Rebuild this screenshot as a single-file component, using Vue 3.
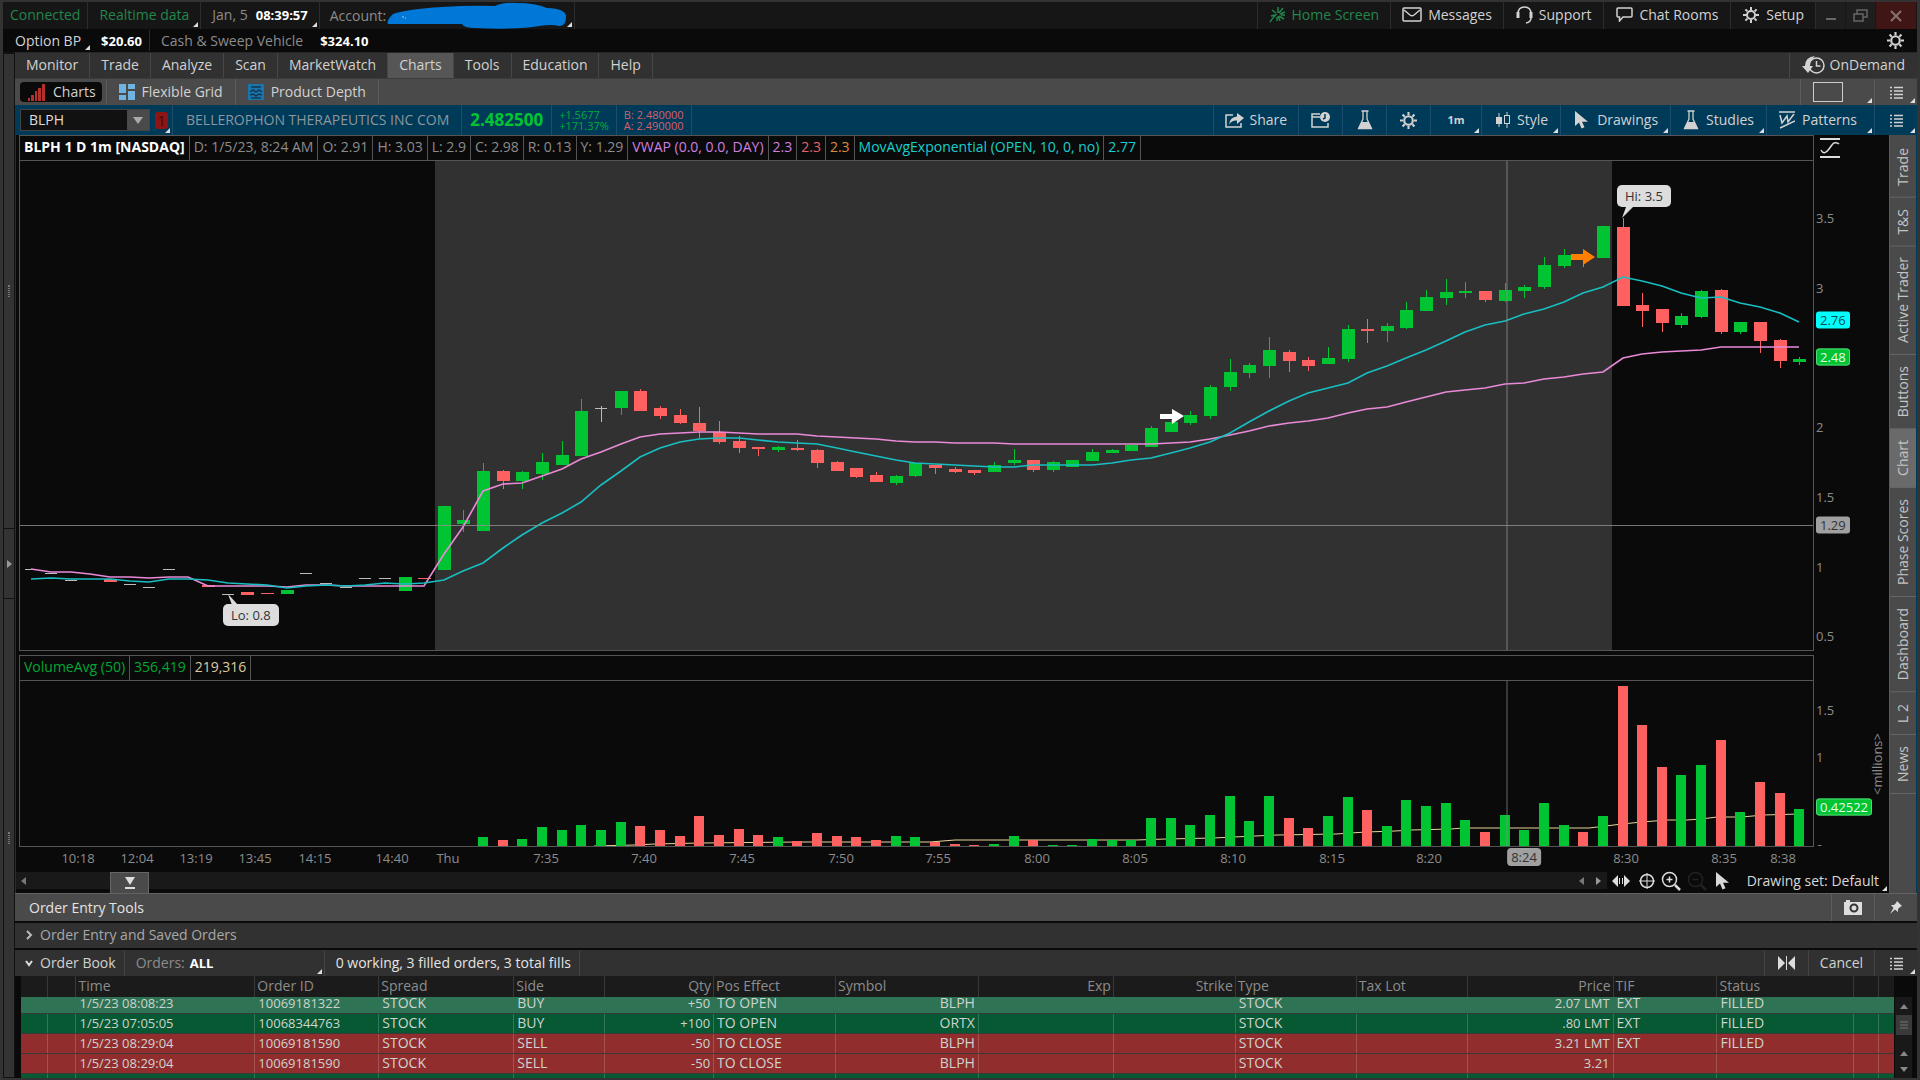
<script setup>
import { ref } from 'vue'

const symbol = ref('BLPH')
const activeMenu = ref('Charts')
const activeSide = ref('Chart')

const menu = ['Monitor', 'Trade', 'Analyze', 'Scan', 'MarketWatch', 'Charts', 'Tools', 'Education', 'Help']
const sideTabs = ['Trade', 'T&S', 'Active Trader', 'Buttons', 'Chart', 'Phase Scores', 'Dashboard', 'L 2', 'News']

const legend = [
    { text: 'BLPH 1 D 1m [NASDAQ]', tone: 'title' },
    { text: 'D: 1/5/23, 8:24 AM' },
    { text: 'O: 2.91' },
    { text: 'H: 3.03' },
    { text: 'L: 2.9' },
    { text: 'C: 2.98' },
    { text: 'R: 0.13' },
    { text: 'Y: 1.29' },
    { text: 'VWAP (0.0, 0.0, DAY)', tone: 'violet' },
    { text: '2.3', tone: 'violet' },
    { text: '2.3', tone: 'coral' },
    { text: '2.3', tone: 'orange' },
    { text: 'MovAvgExponential (OPEN, 10, 0, no)', tone: 'cyan' },
    { text: '2.77', tone: 'cyan' }
]

// view boxes of the two plots: left, top, width, height
const price = { x: 20, y: 161, w: 1793, h: 489 }
const vol = { x: 20, y: 681, w: 1793, h: 165 }

const barX = (i) => Math.round(31.3 + i * 19.645)
const left = (x) => ((x - price.x) / price.w) * 100 + '%'
const top = (y, box) => ((y - box.y) / box.h) * 100 + '%'

// kind, body top, body bottom, high, low
const candles = [
    ['w', 569], ['w', 573], ['w', 580], null, ['r', 579, 582], ['w', 584], ['w', 587], ['w', 569], null, ['r', 585, 587],
    ['w', 594], ['r', 592, 595], ['r', 593, 594], ['g', 590, 594], ['w', 573], ['w', 583], ['w', 587], ['w', 578], ['w', 578], ['g', 577, 591],
    ['r', 578, 579], ['g', 506, 570], ['g', 520, 524, 510, 532], ['g', 471, 531, 463], ['r', 471, 481, 470, 489], ['g', 472, 481, 471, 489], ['g', 462, 474, 453, 480], ['g', 455, 465, 441], ['g', 411, 456, 399], ['w', 408, 408, 406, 422],
    ['g', 391, 408, 391, 415], ['r', 391, 411, 389], ['r', 408, 416, 406, 419], ['r', 415, 423, 409, 424], ['r', 423, 431, 407, 438], ['r', 432, 442, 421, 444], ['r', 441, 448, 436, 453], ['r', 447, 449, 447, 456], ['g', 447, 450, 446, 452], ['r', 448, 450, 440, 451],
    ['r', 450, 463, 449, 468], ['r', 462, 471, 461], ['r', 468, 477, 468, 478], ['r', 475, 482, 472], ['g', 476, 483, 475, 485], ['g', 463, 476, 463, 477], ['r', 465, 468, 465, 474], ['r', 469, 472, 467, 473], ['r', 470, 473, 470, 475], ['g', 465, 472, 462],
    ['g', 460, 463, 449, 465], ['r', 460, 470, 460, 472], ['g', 462, 470, 461, 472], ['g', 460, 467], ['g', 452, 461, 449], ['g', 450, 453, 449], ['g', 445, 451], ['g', 428, 447, 426], ['g', 422, 432, 420], ['g', 415, 423, 411, 425],
    ['g', 387, 416, 385, 419], ['g', 372, 387, 359, 391], ['g', 365, 373, 363, 378], ['g', 350, 366, 337, 378], ['r', 352, 361, 350, 372], ['r', 360, 366, 357, 371], ['g', 358, 364, 347], ['g', 329, 359, 325, 362], ['r', 329, 331, 319, 343], ['g', 326, 331, 323, 342],
    ['g', 310, 328, 302, 329], ['g', 297, 311, 290], ['g', 292, 298, 279, 305], ['g', 291, 293, 282, 298], ['r', 291, 300, 291, 302], ['g', 290, 301, 283, 302], ['g', 287, 291, 285, 298], ['g', 265, 287, 257, 289], ['g', 255, 266, 249, 268], ['r', 257, 260, 252, 267],
    ['g', 226, 258], ['r', 227, 306, 218], ['r', 305, 311, 293, 327], ['r', 309, 323, 309, 332], ['g', 316, 325, 313, 328], ['g', 291, 317, 290, 318], ['r', 290, 332, 289, 334], ['g', 322, 332, 322, 334], ['r', 322, 341, 322, 353], ['r', 340, 361, 339, 368],
    ['g', 359, 362, 357, 365]
].map((c, i) => {
    if (!c) return null
    const [kind, t, b = t, h = t, l = b] = c
    return { kind, x: barX(i), t, b, h, l }
}).filter((c) => c)

const ema = [
    579, 578, 579, 579, 579, 581, 582, 579, 579, 580, 583, 584, 585, 588, 586, 585, 586, 585, 583, 584,
    583, 580, 571, 563, 548, 535, 523, 513, 502, 485, 471, 457, 448, 442, 439, 438, 438, 440, 442, 443,
    444, 448, 452, 456, 460, 463, 464, 465, 466, 467, 467, 465, 465, 465, 465, 463, 460, 458, 453, 448,
    442, 433, 422, 411, 401, 393, 388, 383, 373, 366, 358, 350, 341, 332, 325, 321, 314, 309, 302, 293,
    287, 277, 281, 286, 293, 298, 297, 303, 307, 313, 322
]
const vwap = [
    569, 572, 572, 574, 577, 577, 578, 577, 577, 586, 586, 586, 586, 587, 585, 585, 586, 586, 586, 586,
    586, 554, 527, 491, 484, 483, 476, 469, 459, 452, 444, 437, 434, 433, 432, 432, 433, 434, 434, 434,
    436, 437, 438, 439, 441, 442, 442, 443, 443, 443, 444, 444, 444, 444, 444, 444, 444, 444, 443, 442,
    439, 435, 431, 426, 423, 421, 418, 413, 409, 407, 402, 397, 392, 390, 388, 384, 383, 379, 377, 374,
    372, 358, 354, 352, 351, 350, 347, 347, 347, 347, 347
]
const toPoints = (ys) => ys.map((y, i) => `${barX(i)},${y}`).join(' ')

// bar tops, from 7:32 on
const volumes = [
    837, 840, 839, 827, 830, 825, 830, 822, 826, 830, 836, 816, 835, 829, 835, 837, 841, 833, 836, 837,
    840, 836, 837, 842, 844, 845, 844, 836, 840, 845, 845, 839, 840, 840, 818, 818, 825, 815, 796, 821,
    796, 818, 828, 816, 797, 810, 826, 800, 806, 803, 820, 832, 815, 830, 803, 825, 832, 816, 686, 725,
    767, 775, 765, 740, 812, 782, 793, 809
].map((y, n) => {
    const x = barX(n + 23)
    return { x, y, kind: candles.find((c) => c.x === x)?.kind === 'r' ? 'r' : 'g' }
})
const volAvg = '594,846 634,845 655,844 700,843 800,842 930,842 955,840 1136,840 1166,839 1213,838 1255,836 1277,835 1336,834 1366,832 1395,831 1411,830 1451,829 1463,828 1589,828 1622,824 1642,822 1667,820 1687,820 1701,819 1717,817 1742,817 1763,815 1800,814'

const priceTicks = [
    { text: '3.5', y: 218 }, { text: '3', y: 288 }, { text: '2', y: 427 },
    { text: '1.5', y: 497 }, { text: '1', y: 567 }, { text: '0.5', y: 636 },
    { text: '2.76', y: 320, tag: 'tag-cyan' }, { text: '2.48', y: 357, tag: 'tag-green' }, { text: '1.29', y: 525, tag: 'tag-gray' }
]
const volTicks = [
    { text: '1.5', y: 710 }, { text: '1', y: 757 }, { text: '0.5', y: 803 }, { text: '0', y: 849 },
    { text: '0.42522', y: 807, tag: 'tag-green' }
]
const times = [
    ['10:18', 78], ['12:04', 137], ['13:19', 196], ['13:45', 255], ['14:15', 315], ['14:40', 392], ['Thu', 448],
    ['7:35', 546], ['7:40', 644], ['7:45', 742], ['7:50', 841], ['7:55', 938], ['8:00', 1037], ['8:05', 1135],
    ['8:10', 1233], ['8:15', 1332], ['8:20', 1429], ['8:30', 1626], ['8:35', 1724], ['8:38', 1783]
]

const columns = [
    { w: 27 }, { w: 28 }, { name: 'Time', w: 179, num: true }, { name: 'Order ID', w: 124, num: true }, { name: 'Spread', w: 135 },
    { name: 'Side', w: 91 }, { name: 'Qty', w: 109, right: true, num: true }, { name: 'Pos Effect', w: 122 }, { name: 'Symbol', w: 143, rightCell: true },
    { name: 'Exp', w: 135, right: true }, { name: 'Strike', w: 122, right: true }, { name: 'Type', w: 121 }, { name: 'Tax Lot', w: 111 },
    { name: 'Price', w: 146, right: true, num: true }, { name: 'TIF', w: 104 }, { name: 'Status', w: 137 }, { w: 25 }, { w: 15 }
]
const totalWidth = columns.reduce((sum, c) => sum + c.w, 0)
const orders = [
    { tone: 'hover', cells: ['', '', '1/5/23 08:08:23', '10069181322', 'STOCK', 'BUY', '+50', 'TO OPEN', 'BLPH', '', '', 'STOCK', '', '2.07 LMT', 'EXT', 'FILLED', '', ''] },
    { tone: 'buy', cells: ['', '', '1/5/23 07:05:05', '10068344763', 'STOCK', 'BUY', '+100', 'TO OPEN', 'ORTX', '', '', 'STOCK', '', '.80 LMT', 'EXT', 'FILLED', '', ''] },
    { tone: 'sell', cells: ['', '', '1/5/23 08:29:04', '10069181590', 'STOCK', 'SELL', '-50', 'TO CLOSE', 'BLPH', '', '', 'STOCK', '', '3.21 LMT', 'EXT', 'FILLED', '', ''] },
    { tone: 'sell', cells: ['', '', '1/5/23 08:29:04', '10069181590', 'STOCK', 'SELL', '-50', 'TO CLOSE', 'BLPH', '', '', 'STOCK', '', '3.21', '', '', '', ''] },
    { tone: 'buy', cells: columns.map(() => '') }
]
</script>

<template>
    <div class="app">
        <svg class="defs" aria-hidden="true">
            <symbol id="gear" viewBox="0 0 16 16">
                <circle cx="8" cy="8" r="4" fill="none" stroke="currentColor" stroke-width="2" />
                <path d="M8 0v3M8 13v3M0 8h3M13 8h3M2.4 2.4l2 2M11.6 11.6l2 2M13.6 2.4l-2 2M4.4 11.6l-2 2" stroke="currentColor" stroke-width="2" />
            </symbol>
            <symbol id="list" viewBox="0 0 13 13">
                <path d="M0 1.5h2M0 5h2M0 8.5h2M0 12h2M4 1.5h9M4 5h9M4 8.5h9M4 12h9" stroke="currentColor" stroke-width="1.5" />
            </symbol>
            <symbol id="flask" viewBox="0 0 16 20">
                <path d="M4.5 1h7M6 1v8L1.5 18.5h13L10 9V1" fill="none" stroke="currentColor" stroke-width="1.3" />
                <path d="M4.5 12h7l3.5 7H1z" fill="currentColor" />
            </symbol>
            <symbol id="cursor" viewBox="0 0 13 18">
                <path d="M0 0v15l4-3.5 2.5 6 3-1.3-2.5-5.5H13z" fill="currentColor" />
            </symbol>
        </svg>

        <header class="status">
            <button class="cell dim-green">Connected</button>
            <button class="cell dim-green corner">Realtime data</button>
            <button class="cell corner muted">Jan, 5 <b>08:39:57</b></button>
            <button class="cell corner account muted">
                Account:
                <svg class="redact" width="180" height="27" viewBox="0 0 180 27">
                    <path d="M1 22Q-1 19 6 12Q20 7 55 5Q85 3 108 4Q116 0 130 1Q148 1 160 6Q180 7 179 15Q179 24 172 24Q165 22 152 24Q130 28 88 26Q77 26 75 22Z" fill="#0078d7" />
                    <path d="M15 15h2M18 16h1" stroke="#9cf" stroke-width="1" />
                </svg>
            </button>
            <span class="grow"></span>
            <button class="cell edge dim-green">
                <svg width="17" height="17" viewBox="0 0 17 17" fill="none" stroke="currentColor" stroke-width="1.5">
                    <path d="M1 16Q5 10 8 8M9 1v6M14 2l-4 5M16 6l-5 2M3 4l4 3M2 10l4-1M10 10l5 3M9 10l2 5M8 11v4M12 9h4" />
                </svg>
                Home Screen
            </button>
            <button class="cell">
                <svg width="20" height="15" viewBox="0 0 20 15" fill="none" stroke="currentColor" stroke-width="1.5">
                    <rect x="1" y="1" width="18" height="13" rx="1" /><path d="M2 3l6 5q2 1.5 4 0l6-5" />
                </svg>
                Messages
            </button>
            <button class="cell wide">
                <svg width="17" height="18" viewBox="0 0 17 18" fill="none" stroke="currentColor">
                    <path d="M2 8Q2 1 8.5 1T15 8" stroke-width="1.5" /><path d="M2 6v6M15 6v6" stroke-width="3" /><path d="M15 12q0 4-5 5" stroke-width="1.5" />
                </svg>
                Support
            </button>
            <button class="cell wide">
                <svg width="17" height="15" viewBox="0 0 17 15" fill="none" stroke="currentColor" stroke-width="1.5">
                    <path d="M2 1h13q1 0 1 1v7q0 1-1 1H7l-3.5 4v-4H2q-1 0-1-1V2q0-1 1-1z" />
                </svg>
                Chat Rooms
            </button>
            <button class="cell setup"><svg width="16" height="16"><use href="#gear" /></svg>Setup</button>
            <button class="win" aria-label="Minimize"><svg width="12" height="12"><path d="M1 9h10" stroke="#666" stroke-width="2" /></svg></button>
            <button class="win" aria-label="Restore">
                <svg width="15" height="14" viewBox="0 0 15 14" fill="none" stroke="#666" stroke-width="1.5"><path d="M4 5V1h10v7h-4" /><rect x="1" y="5" width="9" height="7" /></svg>
            </button>
            <button class="win close" aria-label="Close"><svg width="12" height="12"><path d="M1 1l10 10M11 1L1 11" stroke="#8a7070" stroke-width="2" /></svg></button>
        </header>

        <div class="balance">
            <button class="bp corner">Option BP</button>
            <b>$20.60</b>
            <i class="rule"></i>
            <span class="muted">Cash &amp; Sweep Vehicle</span>
            <b class="cash">$324.10</b>
            <span class="grow"></span>
            <button class="icon-btn" aria-label="Account settings"><svg width="17" height="17"><use href="#gear" /></svg></button>
        </div>

        <div class="body">
            <aside class="gutter">
                <div class="g1"><i class="dots"></i></div>
                <div class="g2"><svg width="5" height="8"><path d="M0 0l5 4-5 4z" fill="#999" /></svg></div>
                <div class="g3"><i class="dots"></i></div>
            </aside>
            <main class="main">
                <nav class="menu">
                    <button v-for="m in menu" :key="m" :class="{ active: m === activeMenu }" @click="activeMenu = m">{{ m }}</button>
                    <span class="grow"></span>
                    <button class="ondemand">
                        <svg width="23" height="18" viewBox="0 0 23 18">
                            <circle cx="14.5" cy="9.5" r="7.5" fill="none" stroke="currentColor" stroke-width="1.5" />
                            <path d="M14.5 5v5h4" fill="none" stroke="currentColor" stroke-width="1.5" />
                            <path d="M13 0Q3 1 3 10H0l6 7 5-7H8Q8 4 13 0z" fill="currentColor" />
                        </svg>
                        OnDemand
                    </button>
                </nav>

                <nav class="subtabs">
                    <div class="sub first">
                        <button class="pill">
                            <svg width="17" height="17" viewBox="0 0 17 17" fill="#b5302c"><path d="M0 14h2v3H0zM3 11h3v6H3zM7 7h2v10H7zM10 4h3v13h-3zM14 0h3v17h-3z" /></svg>
                            Charts
                        </button>
                    </div>
                    <button class="sub">
                        <svg width="16" height="16" viewBox="0 0 16 16" fill="#6fb4e0"><path d="M0 0h7v9H0zM9 0h7v5H9zM0 11h7v5H0zM9 7h7v9H9z" /></svg>
                        Flexible Grid
                    </button>
                    <button class="sub">
                        <svg width="16" height="16" viewBox="0 0 16 16"><rect width="16" height="16" fill="#1a75ae" /><path d="M3 3h10M2 8l3-2 3 2 3-2 3 2M2 11l3-1 3 2 3-2 3 1M3 14h10" fill="none" stroke="#12384f" stroke-width="1.5" /></svg>
                        Product Depth
                    </button>
                    <span class="grow"></span>
                    <button class="layout corner" aria-label="Grid layout"><i></i></button>
                    <button class="menu-btn corner" aria-label="Tab menu"><svg width="13" height="13"><use href="#list" /></svg></button>
                </nav>

                <div class="toolbar">
                    <div class="symbol">
                        <input v-model="symbol" aria-label="Symbol" />
                        <button aria-label="Recent symbols"><svg width="10" height="7"><path d="M0 0h10L5 7z" fill="#aaa" /></svg></button>
                    </div>
                    <button class="link corner" aria-label="Link group"><span>1</span></button>
                    <div class="tcell name">BELLEROPHON THERAPEUTICS INC COM</div>
                    <div class="tcell last">2.482500</div>
                    <div class="tcell stack up"><span>+1.5677</span><span>+171.37%</span></div>
                    <div class="tcell stack down"><span>B: 2.480000</span><span>A: 2.490000</span></div>
                    <span class="tcell grow"></span>
                    <button class="tcell share">
                        <svg width="19" height="15" viewBox="0 0 19 15">
                            <path d="M8 2H1v12h15v-4" fill="none" stroke="currentColor" stroke-width="1.5" />
                            <path d="M12 0l7 5-7 6V7.5Q7 7 4 11.5 5 4 12 3.5z" fill="currentColor" />
                        </svg>
                        Share
                    </button>
                    <button class="tcell tool" aria-label="Alerts">
                        <svg width="19" height="16" viewBox="0 0 19 16" fill="none" stroke="currentColor" stroke-width="1.5">
                            <path d="M9 2H1v13h16v-4M1 5h8" /><circle cx="14" cy="5" r="5" fill="currentColor" stroke="none" /><path d="M14 2v4l-2 1" stroke="#003a59" />
                        </svg>
                    </button>
                    <button class="tcell tool" aria-label="Edit studies"><svg width="16" height="20"><use href="#flask" /></svg></button>
                    <button class="tcell tool" aria-label="Chart settings"><svg width="17" height="17"><use href="#gear" /></svg></button>
                    <button class="tcell frame-btn corner">1m</button>
                    <button class="tcell corner style-btn">
                        <svg width="14" height="16" viewBox="0 0 14 16"><path d="M3 1v14M11 0v3M11 12v4" stroke="currentColor" /><rect y="5" width="6" height="7" fill="currentColor" /><rect x="8.5" y="3.5" width="5" height="8" fill="none" stroke="currentColor" /></svg>
                        Style
                    </button>
                    <button class="tcell corner"><svg width="17" height="18"><use href="#cursor" /></svg>Drawings</button>
                    <button class="tcell corner"><svg width="16" height="20"><use href="#flask" /></svg>Studies</button>
                    <button class="tcell corner patterns">
                        <svg width="16" height="18" viewBox="0 0 16 18" fill="none" stroke="currentColor" stroke-width="1.5"><path d="M0 1h16M1 4l2 8 5-7 1 6 6-8M1 17l15-7" /></svg>
                        Patterns
                    </button>
                    <button class="menu-btn tcell corner" aria-label="Chart menu"><svg width="13" height="13"><use href="#list" /></svg></button>
                </div>

                <div class="workspace">
                    <section class="charts">
                        <div class="panel price">
                            <div class="frame">
                                <div class="legend">
                                    <span v-for="(l, i) in legend" :key="i" :class="l.tone">{{ l.text }}</span>
                                </div>
                                <div class="plot">
                                    <svg class="canvas" :viewBox="`${price.x} ${price.y} ${price.w} ${price.h}`" preserveAspectRatio="none">
                                        <rect x="435" y="161" width="1177" height="489" fill="#313131" />
                                        <g v-for="c in candles" :key="c.x" :class="c.kind">
                                            <rect v-if="c.l > c.h" :x="c.x" :y="c.h" width="1" :height="c.l - c.h" />
                                            <rect :x="c.x - 6" :y="c.t" :width="c.kind === 'w' ? 12 : 13" :height="c.kind === 'w' ? 1 : c.b - c.t" />
                                        </g>
                                        <polyline :points="toPoints(vwap)" class="vwap" stroke-width="1.6" />
                                        <polyline :points="toPoints(ema)" class="ema" stroke-width="1.6" />
                                        <path d="M20 525.5H1813M1507 161V650" stroke="#909090" stroke-opacity=".8" />
                                        <path d="M1160 414h12v-5l12 7-12 8v-5h-12z" fill="#fff" />
                                        <path d="M1571 254h12v-5l12 8-12 8v-5h-12z" fill="#ff7f00" />
                                        <path d="M228 594l4 11h6z" fill="#ddd" />
                                        <path d="M1622 218l4-11h7z" fill="#ddd" />
                                    </svg>
                                    <span class="callout" :style="{ left: left(223), top: top(604, price) }">Lo: 0.8</span>
                                    <span class="callout" :style="{ left: left(1617), top: top(185, price) }">Hi: 3.5</span>
                                </div>
                            </div>
                            <div class="axis">
                                <div class="fit">
                                    <svg width="20" height="20" viewBox="0 0 20 20" fill="none" stroke="#ddd"><path d="M0 1h20M0 19h20" stroke-width="2" /><path d="M1 12q3 6 8-1t5-6q3-1 5 1" stroke-width="1.5" /></svg>
                                </div>
                                <div class="scale">
                                    <span v-for="t in priceTicks" :key="t.text" :class="['tick', t.tag]" :style="{ top: top(t.y, price) }">{{ t.text }}</span>
                                </div>
                            </div>
                        </div>

                        <div class="panel volume">
                            <div class="frame">
                                <div class="legend">
                                    <span class="green">VolumeAvg (50)</span><span class="green">356,419</span><span class="sand">219,316</span>
                                </div>
                                <div class="plot">
                                    <svg class="canvas" :viewBox="`${vol.x} ${vol.y} ${vol.w} ${vol.h}`" preserveAspectRatio="none">
                                        <polyline :points="volAvg" class="avg" />
                                        <rect v-for="v in volumes" :key="v.x" :class="v.kind" :x="v.x - 5" :y="v.y" width="10" :height="846 - v.y" />
                                        <path d="M1507 681V846" stroke="#909090" stroke-opacity=".7" />
                                    </svg>
                                </div>
                            </div>
                            <div class="axis">
                                <div class="fit"></div>
                                <div class="scale clip">
                                    <span v-for="t in volTicks" :key="t.text" :class="['tick', t.tag]" :style="{ top: top(t.y, vol) }">{{ t.text }}</span>
                                    <span class="unit">&lt;millions&gt;</span>
                                </div>
                            </div>
                        </div>

                        <div class="times">
                            <span v-for="[t, x] in times" :key="t" :style="{ left: left(x) }">{{ t }}</span>
                            <span class="now" :style="{ left: left(1524) }">8:24</span>
                        </div>

                        <div class="scroller">
                            <div class="track start"><svg width="5" height="8"><path d="M5 0L0 4l5 4z" fill="#777" /></svg></div>
                            <button class="handle" aria-label="Collapse panel"><svg width="10" height="13"><path d="M0 0h10L5 8zM0 10h10v2H0z" fill="#ddd" /></svg></button>
                            <div class="track end">
                                <svg width="5" height="8"><path d="M5 0L0 4l5 4z" fill="#777" /></svg>
                                <svg width="5" height="8"><path d="M0 0l5 4-5 4z" fill="#999" /></svg>
                            </div>
                            <div class="tools">
                                <button aria-label="Expand"><svg width="18" height="12" viewBox="0 0 18 12" fill="#ddd"><path d="M6 0v12L0 6zM12 0v12l6-6zM7 3h1v6H7zM10 3h1v6h-1z" /></svg></button>
                                <button aria-label="Crosshair"><svg width="16" height="16" viewBox="0 0 16 16" fill="none" stroke="#ddd"><circle cx="8" cy="8" r="6.5" stroke-width="1.5" /><path d="M8 0v16M0 8h16" /></svg></button>
                                <button aria-label="Zoom in"><svg width="20" height="20" viewBox="0 0 20 20" fill="none" stroke="#ddd"><circle cx="8.5" cy="8.5" r="7" stroke-width="1.5" /><path d="M14 14l5 5" stroke-width="2.5" /><path d="M5.5 8.5h6M8.5 5.5v6" stroke-width="1.5" /></svg></button>
                                <button aria-label="Zoom out"><svg width="20" height="20" viewBox="0 0 20 20" fill="none" stroke="#222"><circle cx="8.5" cy="8.5" r="7" stroke-width="1.5" /><path d="M14 14l5 5" stroke-width="2.5" /><path d="M5.5 8.5h6" stroke-width="1.5" /></svg></button>
                                <button aria-label="Pointer" class="pointer"><svg width="13" height="18"><use href="#cursor" /></svg></button>
                                <button class="set corner">Drawing set: Default</button>
                            </div>
                        </div>
                    </section>

                    <nav class="side">
                        <button v-for="s in sideTabs" :key="s" :class="{ active: s === activeSide }" @click="activeSide = s">{{ s }}</button>
                    </nav>
                </div>

                <section class="orders">
                    <div class="otools">
                        <span>Order Entry Tools</span>
                        <span class="grow"></span>
                        <button aria-label="Snapshot"><svg width="18" height="15" viewBox="0 0 18 15"><path d="M0 2h2V0h4v2h12v13H0z" fill="#ddd" /><circle cx="10" cy="8" r="3.5" fill="none" stroke="#333" stroke-width="2" /></svg></button>
                        <button aria-label="Pin"><svg width="12" height="13" viewBox="0 0 12 13"><path d="M7 0l5 5-2 1-2 2v3L5 8.5 0 13l3.5-6L1 4h3l2-2z" fill="#ddd" /></svg></button>
                    </div>
                    <button class="saved"><svg width="7" height="10"><path d="M1 1l4 4-4 4" fill="none" stroke="#bbb" stroke-width="2" /></svg>Order Entry and Saved Orders</button>
                    <div class="book">
                        <button class="book-title"><svg width="8" height="7"><path d="M1 1l3 4 3-4" fill="none" stroke="#ddd" stroke-width="2" /></svg>Order Book</button>
                        <button class="filter corner muted">Orders: <b>ALL</b></button>
                        <span class="summary">0 working, 3 filled orders, 3 total fills</span>
                        <span class="grow"></span>
                        <button class="collapse" aria-label="Fit columns"><svg width="17" height="14" viewBox="0 0 17 14" fill="#ddd"><path d="M0 0l7 7-7 7zM17 0l-7 7 7 7zM8 0h1v14H8z" /></svg></button>
                        <button class="cancel">Cancel</button>
                        <button class="menu-btn corner" aria-label="Order book menu"><svg width="13" height="13"><use href="#list" /></svg></button>
                    </div>
                    <div class="grid">
                        <div class="tables">
                            <table>
                                <colgroup><col v-for="(c, i) in columns" :key="i" :style="{ width: (c.w / totalWidth) * 100 + '%' }" /></colgroup>
                                <thead>
                                    <tr><th v-for="(c, i) in columns" :key="i" :class="{ right: c.right }">{{ c.name }}</th></tr>
                                </thead>
                                <tbody>
                                    <tr v-for="(o, n) in orders" :key="n" :class="o.tone">
                                        <td v-for="(c, i) in o.cells" :key="i" :class="{ right: columns[i].right || columns[i].rightCell, num: columns[i].num }"><div>{{ c }}</div></td>
                                    </tr>
                                </tbody>
                            </table>
                        </div>
                        <div class="vscroll">
                            <svg width="8" height="5"><path d="M0 5l4-5 4 5z" fill="#888" /></svg>
                            <div class="thumb"><svg width="8" height="8"><path d="M0 1h8M0 4h8M0 7h8" stroke="#777" /></svg></div>
                            <svg class="lower" width="8" height="5"><path d="M0 5l4-5 4 5z" fill="#888" /></svg>
                            <svg width="8" height="5"><path d="M0 0l4 5 4-5z" fill="#888" /></svg>
                        </div>
                    </div>
                </section>
            </main>
        </div>
    </div>
</template>

<style>
body {
    margin: 0;
    background: #333;
}
</style>

<style scoped>
* {
    box-sizing: border-box;
}

.app {
    display: flex;
    flex-direction: column;
    height: 100vh;
    border: solid #333;
    border-width: 2px 3px;
    background: #0a0a0a;
    color: #d2d2d2;
    font: 14px/18px "Open Sans", "Noto Sans", sans-serif;
    white-space: nowrap;
    overflow: hidden;
}

.defs {
    display: none;
}

button {
    border: 0;
    padding: 0;
    background: none;
    color: inherit;
    font: inherit;
    display: flex;
    align-items: center;
    cursor: pointer;
}

svg {
    flex: none;
}

b {
    color: #fff;
    font-size: 13px;
}

.grow {
    flex: 1;
}

.muted {
    color: #8c8c8c;
}

.dim-green {
    color: #23864c;
}

.corner {
    position: relative;
}

.corner::after {
    content: "";
    position: absolute;
    right: 2px;
    bottom: 2px;
    border: solid transparent;
    border-width: 0 0 5px 5px;
    border-bottom-color: #ddd;
}

/* status row */
.status {
    display: flex;
    height: 27px;
    background: #161616;
}

.cell {
    gap: 6px;
    padding: 0 11px 2px;
    border-right: 1px solid #2c2c2c;
}

.cell.wide {
    padding: 0 12px 2px;
}

.status .cell:first-child {
    padding: 0 7px 2px;
}

.cell.setup {
    gap: 7px;
    padding-left: 12px;
}

.account {
    width: 255px;
    padding: 0 0 0 10px;
    gap: 1px;
}

.cell b {
    margin-left: 2px;
}

.edge {
    border-left: 1px solid #2c2c2c;
}

.win {
    width: 30px;
    justify-content: center;
    background: #1e1e1e;
    border-right: 1px solid #161616;
}

.win.close {
    width: 41px;
    background: #401515;
}

.balance {
    display: flex;
    align-items: center;
    height: 23px;
    padding-left: 12px;
}

.bp {
    height: 23px;
    padding-right: 11px;
    margin-right: 9px;
}

.rule {
    width: 1px;
    height: 21px;
    margin: 0 11px 0 7px;
    background: #2c2c2c;
}

.cash {
    margin-left: 17px;
}

.icon-btn {
    padding-right: 13px;
}

.body {
    display: flex;
    flex: 1;
    min-height: 0;
}

.gutter {
    display: flex;
    flex-direction: column;
    gap: 1px;
    width: 12px;
    padding: 2px 1px 1px 1px;
    background: #111;
}

.gutter div {
    display: flex;
    align-items: center;
    justify-content: center;
    background: #333;
}

.g1 {
    flex: 475;
}

.g2 {
    flex: 69;
}

.g3 {
    flex: 479;
}

.dots {
    width: 2px;
    height: 12px;
    border-left: 1px dotted #777;
    border-right: 1px dotted #777;
}

.main {
    display: flex;
    flex-direction: column;
    flex: 1;
    min-width: 0;
}

.menu {
    display: flex;
    height: 27px;
    background: #313131;
    border-top: 1px solid #262626;
    border-bottom: 1px solid #3c3c3c;
}

.menu button {
    padding: 0 11px 1px;
    border-right: 1px solid #464646;
}

.menu .active {
    background: #565656;
}

.menu .ondemand {
    gap: 5px;
    padding: 0 12px 1px;
    border-left: 1px solid #464646;
    border-right: 0;
}

.subtabs {
    display: flex;
    height: 26px;
    background: #4a4a4a;
}

.sub {
    display: flex;
    align-items: center;
    gap: 7px;
    padding: 0 12px 1px;
    border-right: 1px solid #5c5c5c;
}

.sub.first {
    padding: 0 4px 0 5px;
}

.pill {
    height: 20px;
    gap: 8px;
    padding: 0 6px 0 8px;
    border-radius: 4px;
    background: #0a0a0a;
}

.layout {
    width: 74px;
    padding-left: 12px;
    border-left: 1px solid #5c5c5c;
}

.layout i {
    width: 30px;
    height: 20px;
    border: 1px solid #ccc;
}

.menu-btn {
    width: 43px;
    justify-content: center;
    border-left: 1px solid #5c5c5c;
}

/* chart toolbar */
.toolbar {
    display: flex;
    align-items: stretch;
    height: 30px;
    padding-left: 5px;
    background: #003a59;
}

.symbol {
    display: flex;
    align-self: center;
    width: 130px;
    height: 22px;
    border: 1px solid #444;
    background: #111;
}

.symbol input {
    flex: 1;
    min-width: 0;
    padding: 0 8px;
    border: 0;
    background: none;
    color: #ddd;
    font: inherit;
}

.symbol button {
    width: 22px;
    justify-content: center;
    background: #4a4a4a;
}

.link {
    width: 22px;
    padding-left: 5px;
}

.link span {
    width: 13px;
    height: 17px;
    border-radius: 3px;
    background: #8f1414;
    color: #3a0808;
    line-height: 17px;
    text-align: center;
}

.tcell {
    display: flex;
    align-items: center;
    gap: 7px;
    padding: 0 12px;
    border-left: 1px solid #1b4d6b;
}

.name {
    padding: 0 12px 0 13px;
    color: #8c969c;
}

.last {
    padding: 0 8px;
    color: #00c432;
    font-size: 17px;
    font-weight: bold;
}

.stack {
    flex-direction: column;
    align-items: flex-start;
    justify-content: center;
    gap: 0;
    padding: 0 7px;
    font-size: 11px;
    line-height: 11px;
}

.up {
    color: #00ad38;
}

.down {
    color: #d4606a;
}

.share {
    gap: 5px;
    padding: 0 11px;
}

.tool {
    width: 44px;
    padding: 0;
    justify-content: center;
}

.frame-btn {
    width: 51px;
    padding: 0;
    justify-content: center;
    font-size: 11px;
    font-weight: bold;
}

.style-btn {
    padding: 0 12px 0 14px;
}

.patterns {
    padding-right: 17px;
}

.toolbar .menu-btn {
    padding: 0;
    border-color: #1b4d6b;
}

/* charts */
.workspace {
    display: flex;
    flex: 1;
    min-height: 0;
}

.charts {
    display: flex;
    flex-direction: column;
    flex: 1;
    min-width: 0;
    border-left: 1px solid #003a59;
    color: #8c8c8c;
    font-size: 13px;
}

.panel {
    display: flex;
    padding-left: 3px;
}

.price {
    flex: 1;
    min-height: 0;
    margin-bottom: 4px;
}

.volume {
    height: 192px;
}

.frame {
    display: flex;
    flex-direction: column;
    flex: 1;
    min-width: 0;
    border: 1px solid #555;
}

.legend {
    display: flex;
    height: 25px;
    border-bottom: 1px solid #555;
    font-size: 14px;
}

.legend span {
    padding: 2px 4px 0;
    border-right: 1px solid #555;
}

.title {
    color: #fff;
    font-weight: bold;
}

.violet {
    color: #cf7fe0;
}

.coral {
    color: #e8626c;
}

.orange {
    color: #dd8a3a;
}

.cyan {
    color: #16d0d0;
}

.green {
    color: #00a834;
}

.sand {
    color: #ddc9a0;
}

.plot {
    position: relative;
    flex: 1;
    min-height: 0;
}

.canvas {
    display: block;
    width: 100%;
    height: 100%;
}

.g {
    fill: #00c432;
}

.r {
    fill: #ff6060;
}

.w {
    fill: #bbb;
}

.vwap,
.ema,
.avg {
    fill: none;
    stroke: #e88ad8;
}

.ema {
    stroke: #17bfc2;
}

.avg {
    stroke: #e6d39a;
}

.callout {
    position: absolute;
    height: 22px;
    padding: 2px 8px;
    border-radius: 5px;
    background: #ddd;
    color: #333;
}

.axis {
    display: flex;
    flex-direction: column;
    width: 75px;
}

.fit {
    height: 26px;
    padding: 3px 0 0 6px;
}

.scale {
    position: relative;
    flex: 1;
    margin-bottom: 1px;
}

.clip {
    overflow: hidden;
}

.tick {
    position: absolute;
    left: 2px;
    transform: translateY(-50%);
}

.tick.tag-cyan,
.tick.tag-green,
.tick.tag-gray {
    padding: 0 4px;
    border-radius: 3px;
    line-height: 17px;
}

.tag-cyan {
    background: #00ffff;
    color: #064c4c;
}

.tag-green {
    background: #00c432;
    color: #e8ffe8;
    outline: 1px solid #57d878;
    outline-offset: -1px;
}

.tag-gray {
    background: #a0a0a0;
    color: #333;
}

.unit {
    position: absolute;
    right: 3px;
    bottom: 51px;
    writing-mode: vertical-rl;
    transform: rotate(180deg);
}

.times {
    position: relative;
    height: 25px;
    margin: 0 76px 0 4px;
}

.times span {
    position: absolute;
    top: 2px;
    transform: translateX(-50%);
}

.times .now {
    top: 1px;
    padding: 0 4px;
    border-radius: 4px;
    background: #a0a0a0;
    color: #333;
}

.scroller {
    display: flex;
    height: 21px;
}

.track {
    display: flex;
    align-items: center;
    height: 17px;
    background: #191919;
}

.start {
    width: 94px;
    padding-left: 5px;
}

.handle {
    width: 39px;
    justify-content: center;
    border: 1px solid #666;
    border-bottom: 0;
    background: #4a4a4a;
}

.end {
    flex: 1;
    justify-content: flex-end;
    gap: 12px;
    padding-right: 6px;
}

.tools {
    display: flex;
    align-items: center;
    height: 18px;
    gap: 6px;
    padding-left: 5px;
    color: #d8d8d8;
    font-size: 14px;
}

.tools .pointer {
    padding: 0 12px 0 3px;
}

.tools button:first-child {
    padding-right: 3px;
}

.set {
    height: 20px;
    padding-right: 10px;
}

.set::after {
    bottom: 0;
}

.side {
    display: flex;
    flex-direction: column;
    width: 28px;
    padding-top: 2px;
    background: #4a4a4a;
    border-right: 1px solid #003a59;
    border-left: 1px solid #5a5a5a;
}

.side button {
    writing-mode: vertical-rl;
    transform: rotate(180deg);
    justify-content: center;
    padding: 11px 4px;
    border-top: 1px solid #666;
    color: #c4c4c4;
}

.side .active {
    background: #6a6a6a;
}

/* orders */
.otools {
    display: flex;
    align-items: center;
    height: 28px;
    padding-left: 14px;
    background: #4a4a4a;
    border-top: 1px solid #626262;
    color: #e4e4e4;
}

.otools button {
    width: 43px;
    height: 27px;
    justify-content: center;
    border-left: 1px solid #5c5c5c;
}

.saved {
    width: 100%;
    height: 25px;
    gap: 7px;
    margin: 2px 0;
    padding: 0 0 1px 11px;
    background: #313131;
    color: #a8a8a8;
}

.book {
    display: flex;
    align-items: stretch;
    height: 26px;
    background: #313131;
}

.book-title {
    gap: 7px;
    padding: 0 8px 0 10px;
}

.filter {
    width: 200px;
    gap: 5px;
    padding-left: 11px;
    border-left: 1px solid #444;
}

.summary {
    padding: 4px 8px 0 11px;
    border: solid #444;
    border-width: 0 1px;
    color: #e4e4e4;
}

.collapse {
    width: 44px;
    justify-content: center;
    border-left: 1px solid #444;
}

.cancel {
    width: 66px;
    justify-content: center;
    border-left: 1px solid #444;
}

.book .menu-btn {
    border-color: #444;
}

.grid {
    display: flex;
    height: 102px;
    padding-left: 6px;
    background: #0a0a0a;
}

.tables {
    flex: 1;
    min-width: 0;
    overflow: hidden;
}

table {
    width: 100%;
    table-layout: fixed;
    border-collapse: collapse;
}

th {
    height: 21px;
    padding: 0 2px 2px;
    border-right: 1px solid #383838;
    background: #1b1b1b;
    color: #8c8c8c;
    font-weight: normal;
    text-align: left;
}

td {
    height: 20px;
    padding: 0 3px;
    border-right: 1px solid rgba(255, 255, 255, 0.18);
    border-bottom: 1px solid #3a3a3a;
    color: #cfd3cf;
    vertical-align: top;
}

td div {
    line-height: 18px;
}

th:last-child,
td:last-child {
    border-right: 0;
}

th.right,
td.right {
    text-align: right;
}

td.num {
    font-size: 13px;
}

.hover td {
    height: 16px;
    border-right-color: transparent;
    background: #2e7454;
}

/* first row is scrolled half under the header */
.hover div {
    height: 15px;
    overflow: hidden;
    display: flex;
    flex-direction: column;
    justify-content: flex-end;
}

.buy {
    background: #065932;
}

.sell {
    background: #922d2e;
}

.vscroll {
    display: flex;
    flex-direction: column;
    align-items: center;
    width: 17px;
    margin: 21px 5px 0 1px;
    padding-top: 7px;
    background: #191919;
}

.thumb {
    display: flex;
    align-items: center;
    justify-content: center;
    width: 16px;
    height: 20px;
    margin-top: 6px;
    background: #3a3a3a;
}

.lower {
    margin: 16px 0 11px;
}
</style>
